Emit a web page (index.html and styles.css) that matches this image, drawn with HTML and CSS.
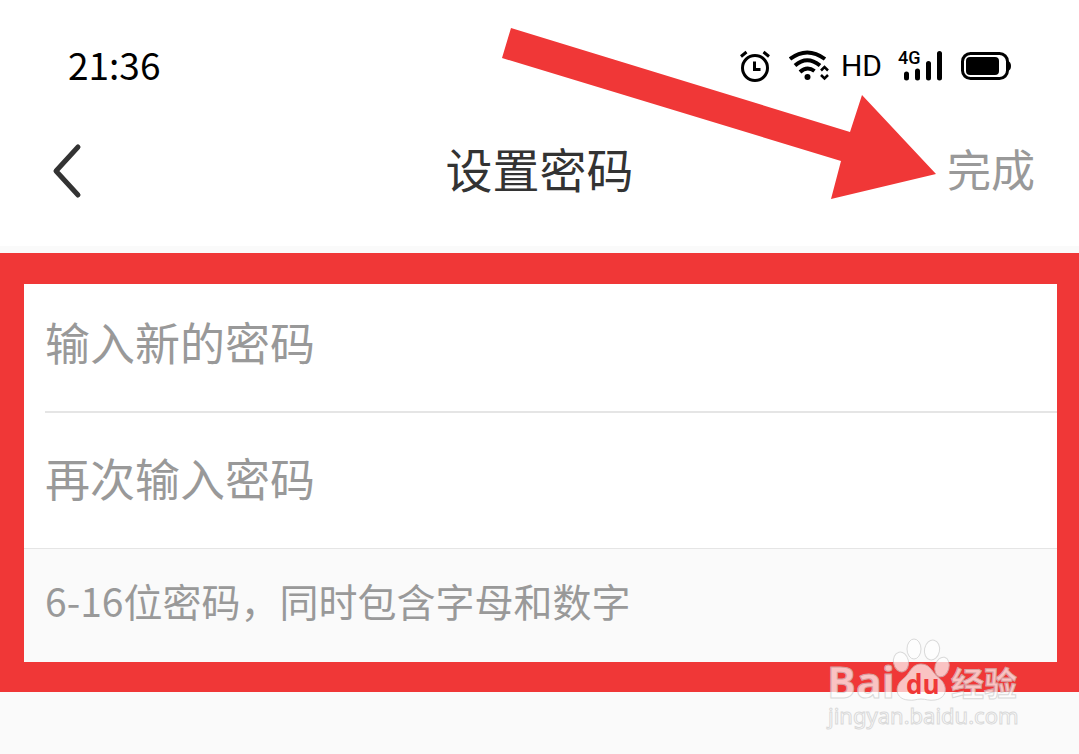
FILE: index.html
```html
<!DOCTYPE html>
<html lang="zh-CN">
<head>
    <meta charset="UTF-8">
    <meta name="viewport" content="width=device-width, initial-scale=1.0">
    <title>设置密码</title>
    <link rel="stylesheet" href="styles.css">
</head>
<body>
    <div class="status-bar">
        <span class="clock">21:36</span>
        <div class="status-icons">
            <svg class="alarm" width="32" height="32" viewBox="0 0 32 32" fill="none" stroke="#000" stroke-width="3">
                <circle cx="16" cy="18" r="12.5"/>
                <path d="M15.500 11.500v8h6M2 6.500l5.500-4.500M30 6.500l-5.500-4.500"/>
            </svg>
            <svg class="wifi" width="40" height="32" viewBox="0 0 40 32" fill="none" stroke="#000" stroke-width="4">
                <path d="M1 9Q18-4 36 9M6 15.500Q18 5 31 15.500M11 22Q18 15.500 25.500 21"/>
                <circle cx="18.500" cy="27" r="3" fill="#000" stroke="none"/>
                <path d="M32 20.500l3.500-3.500 3.500 3.500M32 25l3.500 3.500 3.500-3.500" stroke-width="2.500"/>
            </svg>
            <span class="hd">HD</span>
            <div class="signal">
                <span class="network">4G</span>
                <svg width="44" height="32" viewBox="0 0 44 32" fill="none" stroke="#000" stroke-width="5" stroke-linecap="round">
                    <path d="M8.500 24v4M19.500 21v7M30.500 13.500v14.500M41.500 3.500v24.500"/>
                </svg>
            </div>
            <svg class="battery" width="50" height="28" viewBox="0 0 50 28">
                <rect x="1.500" y="1.500" width="45" height="25" rx="8" fill="none" stroke="#000" stroke-width="3"/>
                <rect x="5" y="5" width="33" height="18" rx="4"/>
                <path d="M47 9q3 1 3 5t-3 5z"/>
            </svg>
        </div>
    </div>

    <header class="nav-bar">
        <button class="back-btn" type="button" aria-label="返回">
            <svg width="30" height="56" viewBox="0 0 30 56" fill="none" stroke="#333" stroke-width="5" stroke-linecap="round" stroke-linejoin="round">
                <path d="M26 4L4 28l22 24"/>
            </svg>
        </button>
        <h1 class="title">设置密码</h1>
        <button class="done-btn" type="submit" form="passwordForm">完成</button>
    </header>

    <main class="content">
        <form class="password-form" id="passwordForm">
            <div class="field">
                <input type="password" id="newPassword" placeholder="输入新的密码" aria-label="输入新的密码">
            </div>
            <div class="field">
                <input type="password" id="repeatPassword" placeholder="再次输入密码" aria-label="再次输入密码">
            </div>
            <p class="hint">6-16位密码，同时包含字母和数字</p>
        </form>
        <div class="highlight"></div>
    </main>

    <!-- arrow pointing at the done button -->
    <svg class="arrow" width="436" height="172" viewBox="0 0 436 172">
        <path d="M11 0L350 104 362 67 436 146 331 171 341 133 2 30z" fill="#f03737"/>
    </svg>

    <svg class="watermark" width="230" height="120" viewBox="0 0 230 120">
        <g class="mark">
            <text class="brand" x="17" y="73">Bai</text>
            <path d="M111 39c-10 0-11 10-18 15-9 7-8 20 5 21 6 1 8-1 13-1s8 2 14 1c13-2 13-15 4-22-7-5-8-14-18-14z"/>
            <ellipse cx="91" cy="37" rx="7.500" ry="10" transform="rotate(-12 91 37)"/>
            <ellipse cx="104" cy="24" rx="7" ry="10"/>
            <ellipse cx="122" cy="25" rx="7.500" ry="10" transform="rotate(12 122 25)"/>
            <ellipse cx="132" cy="42" rx="7" ry="10" transform="rotate(15 132 42)"/>
            <text class="jingyan" x="141" y="71">经验</text>
            <text class="site" x="18" y="99">jingyan.baidu.com</text>
        </g>
        <text class="du" x="96" y="69">du</text>
    </svg>
</body>
</html>
```

FILE: styles.css
```css
* {
    box-sizing: border-box;
}
body {
    position: relative;
    margin: 0;
    min-height: 100vh;
    background: #fafafa;
    color: #333;
    font-family: "Noto Sans CJK SC", sans-serif;
    overflow-x: hidden;
}
button {
    background: none;
    border: none;
    padding: 0;
    font-family: inherit;
    cursor: pointer;
}
.status-bar {
    display: flex;
    justify-content: space-between;
    align-items: center;
    height: 96px;
    padding: 36px 68px 0;
    background: #fff;
    color: #000;
}
.clock {
    padding-bottom: 4px;
    font-size: 37px;
    line-height: 56px;
}
.status-icons {
    display: flex;
    align-items: center;
}
.wifi {
    margin-left: 18px;
}
.hd {
    margin-left: 12px;
    font-family: Roboto, sans-serif;
    font-size: 30px;
    line-height: 60px;
}
.signal {
    position: relative;
    display: flex;
    margin-left: 16px;
}
.network {
    position: absolute;
    left: 0;
    top: -2px;
    font-family: Roboto, sans-serif;
    font-size: 18px;
    font-weight: 500;
    line-height: 20px;
}
.battery {
    margin-left: 19px;
}
.nav-bar {
    display: grid;
    grid-template-columns: 1fr auto 1fr;
    align-items: center;
    height: 150px;
    padding: 0 44px;
    background: #fff;
}
.back-btn {
    justify-self: start;
    display: flex;
    padding: 0 8px;
}
.title {
    margin: 0;
    padding-bottom: 6px;
    font-size: 47px;
    font-weight: normal;
    line-height: 60px;
}
.done-btn {
    justify-self: end;
    padding-bottom: 6px;
    color: #999;
    font-size: 44px;
    line-height: 60px;
}
.content {
    position: relative;
    padding-top: 31px;
}
.password-form {
    background: #fff;
}
.field {
    height: 136px;
    margin-left: 45px;
    border-bottom: 2px solid #e5e5e5;
}
.field input {
    width: 100%;
    height: 100%;
    padding: 0 0 6px;
    border: none;
    outline: none;
    background: none;
    color: #333;
    font-family: inherit;
    font-size: 45px;
}
.field input::placeholder {
    color: #999;
    opacity: 1;
}
.field:nth-child(2) {
    margin-left: 0;
    padding-left: 45px;
    border-bottom-width: 1px;
}
.hint {
    margin: 0;
    padding: 23px 45px 64px;
    background: #fafafa;
    color: #999;
    font-size: 39px;
    line-height: 56px;
}
.highlight {
    position: absolute;
    inset: 7px 0 0;
    border: solid #f03737;
    border-width: 31px 22px 30px 24px;
    pointer-events: none;
}
.arrow {
    position: absolute;
    top: 28px;
    right: 143px;
    pointer-events: none;
}
.watermark {
    position: absolute;
    right: 39px;
    bottom: 9px;
    pointer-events: none;
}
.mark {
    fill: #fff;
    stroke: #ccc;
    stroke-width: 1px;
    opacity: 0.7;
}
.brand {
    font-family: "Open Sans", sans-serif;
    font-size: 43px;
    font-weight: bold;
}
.jingyan {
    font-size: 33px;
    font-weight: bold;
}
.site {
    font-family: "Noto Sans", sans-serif;
    font-size: 22px;
}
.du {
    fill: #f03737;
    font-family: "Open Sans", sans-serif;
    font-size: 26px;
    font-weight: bold;
}
```
